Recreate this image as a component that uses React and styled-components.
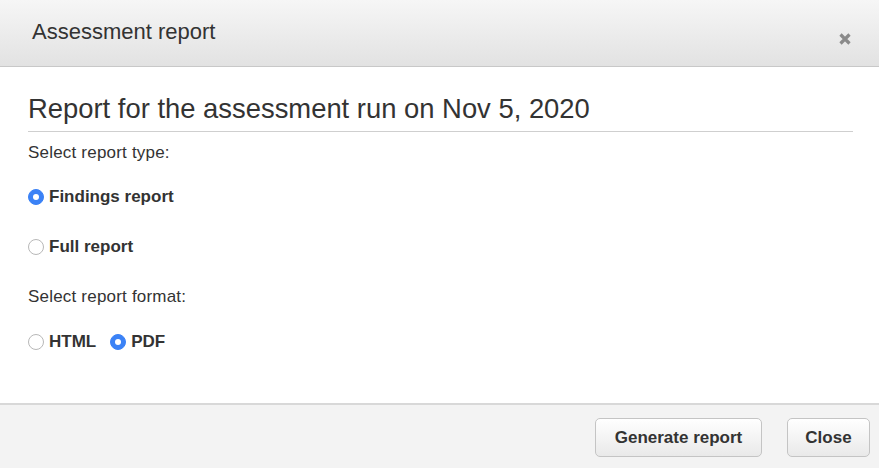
import React, { useState } from "react";
import styled, { createGlobalStyle } from "styled-components";

const Global = createGlobalStyle`
  html, body { margin: 0; padding: 0; background: #fff; }
  body { font-family: "Liberation Sans", Arial, Helvetica, sans-serif; color: #333; }
  * { box-sizing: border-box; }
`;

const Dialog = styled.div`
  width: 879px;
  height: 468px;
  display: flex;
  flex-direction: column;
  background: #fff;
`;

const Header = styled.div`
  height: 67px;
  flex: none;
  display: flex;
  align-items: flex-start;
  justify-content: space-between;
  padding: 0 26px 0 32px;
  background: linear-gradient(#f6f6f6, #e2e2e2);
  border-bottom: 1px solid #c8c8c8;
`;

const Title = styled.h1`
  margin: 19px 0 0;
  font-size: 22px;
  font-weight: normal;
  line-height: 26px;
  color: #333;
`;

const CloseX = styled.button`
  margin-top: 31px;
  width: 16px;
  height: 16px;
  padding: 0;
  border: 0;
  background: none;
  display: flex;
  align-items: center;
  justify-content: center;
  cursor: pointer;
`;

const Body = styled.div`
  flex: 1;
  padding: 26px 26px 0 28px;
`;

const Heading = styled.h2`
  margin: 0;
  font-size: 27.4px;
  font-weight: normal;
  line-height: 32px;
  color: #333;
  padding-bottom: 6px;
  border-bottom: 1px solid #cfcfcf;
`;

const Label = styled.div`
  font-size: 17px;
  letter-spacing: 0.2px;
  line-height: 20px;
  color: #333;
  margin-top: ${(p) => p.$mt}px;
`;

const RadioRow = styled.div`
  display: flex;
  align-items: center;
  gap: 14px;
  height: 20px;
  margin-top: ${(p) => p.$mt}px;
`;

const RadioLabel = styled.label`
  display: flex;
  align-items: center;
  gap: 5px;
  font-size: 17px;
  font-weight: bold;
  color: #333;
  cursor: pointer;
`;

const RadioDot = styled.span`
  width: 16px;
  height: 16px;
  border-radius: 50%;
  flex: none;
  position: relative;
  background: ${(p) => (p.$on ? "#3b82f6" : "#fff")};
  border: 1px solid ${(p) => (p.$on ? "#3b82f6" : "#b8b8b8")};
  &::after {
    content: "";
    display: ${(p) => (p.$on ? "block" : "none")};
    position: absolute;
    left: 50%;
    top: 50%;
    width: 6px;
    height: 6px;
    margin: -3px 0 0 -3px;
    border-radius: 50%;
    background: #fff;
  }
`;

const Footer = styled.div`
  height: 65px;
  flex: none;
  background: #f3f3f3;
  border-top: 2px solid #d8d8d8;
  display: flex;
  align-items: flex-start;
  justify-content: flex-end;
  gap: 25px;
  padding: 13px 9px 0 0;
`;

const Button = styled.button`
  height: 39px;
  width: ${(p) => p.$w}px;
  border: 1px solid #c4c4c4;
  border-radius: 5px;
  background: linear-gradient(#ffffff, #e9e9e9);
  font-family: inherit;
  font-size: 17px;
  font-weight: bold;
  color: #333;
  cursor: pointer;
  padding: 0;
`;

function Radio({ on, label, onClick }) {
  return (
    <RadioLabel onClick={onClick}>
      <RadioDot $on={on} />
      {label}
    </RadioLabel>
  );
}

export default function App() {
  const [type, setType] = useState("findings");
  const [format, setFormat] = useState("pdf");
  return (
    <>
      <Global />
      <Dialog>
        <Header>
          <Title>Assessment report</Title>
          <CloseX aria-label="Close">
            <svg width="14" height="14" viewBox="0 0 14 14">
              <path d="M2.5 2.5 L11.5 11.5 M11.5 2.5 L2.5 11.5" stroke="#8a8a8a" strokeWidth="3.2" strokeLinecap="butt" />
            </svg>
          </CloseX>
        </Header>
        <Body>
          <Heading>Report for the assessment run on Nov 5, 2020</Heading>
          <Label $mt={11}>Select report type:</Label>
          <RadioRow $mt={24}>
            <Radio on={type === "findings"} label="Findings report" onClick={() => setType("findings")} />
          </RadioRow>
          <RadioRow $mt={30}>
            <Radio on={type === "full"} label="Full report" onClick={() => setType("full")} />
          </RadioRow>
          <Label $mt={30}>Select report format:</Label>
          <RadioRow $mt={25}>
            <Radio on={format === "html"} label="HTML" onClick={() => setFormat("html")} />
            <Radio on={format === "pdf"} label="PDF" onClick={() => setFormat("pdf")} />
          </RadioRow>
        </Body>
        <Footer>
          <Button $w={167}>Generate report</Button>
          <Button $w={83}>Close</Button>
        </Footer>
      </Dialog>
    </>
  );
}
